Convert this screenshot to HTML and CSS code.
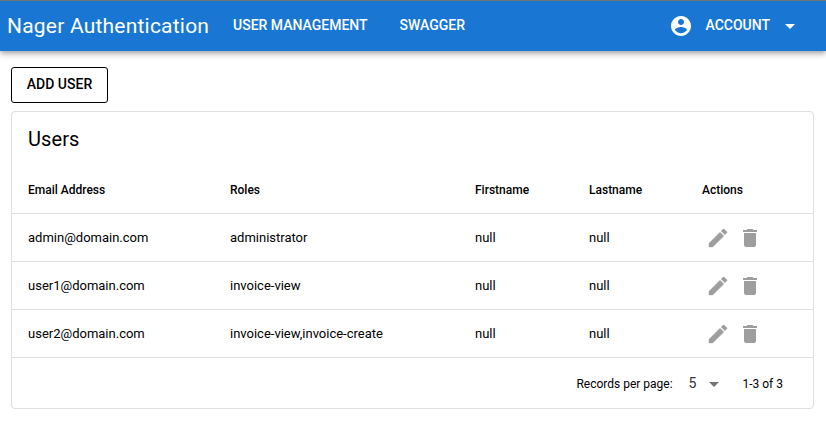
FILE: index.html
```html
<!DOCTYPE html>
<html lang="en">
<head>
<meta charset="utf-8">
<title>Nager Authentication</title>
<link rel="stylesheet" href="styles.css">
</head>
<body>
<svg class="sprite" aria-hidden="true">
  <symbol id="account" viewBox="0 0 24 24"><path d="M12 2C6.480 2 2 6.480 2 12s4.480 10 10 10 10-4.480 10-10S17.520 2 12 2zm0 3c1.660 0 3 1.340 3 3s-1.340 3-3 3-3-1.340-3-3 1.340-3 3-3zm0 14.200c-2.500 0-4.710-1.280-6-3.220.030-1.990 4-3.080 6-3.080 1.990 0 5.970 1.090 6 3.080-1.290 1.940-3.500 3.220-6 3.220z"/></symbol>
  <symbol id="drop" viewBox="0 0 24 24"><path d="M7 10l5 5 5-5z"/></symbol>
  <symbol id="edit" viewBox="0 0 24 24"><path stroke="currentColor" stroke-width=".4" d="M3 17.250V21h3.750L17.810 9.940l-3.750-3.750L3 17.250zM20.710 7.040c.390-.390.390-1.020 0-1.410l-2.340-2.340c-.390-.390-1.020-.390-1.410 0l-1.830 1.830 3.750 3.750 1.830-1.830z"/></symbol>
  <symbol id="delete" viewBox="0 0 24 24"><path d="M6 19c0 1.100.900 2 2 2h8c1.100 0 2-.900 2-2V7H6v12zM19 4h-3.500l-1-1h-5l-1 1H5v2h14V4z"/></symbol>
</svg>
<header class="toolbar">
  <div class="brand">Nager Authentication</div>
  <nav class="nav"><a>User Management</a><a>Swagger</a></nav>
  <div class="account"><svg><use href="#account"/></svg><span>Account</span><svg class="caret"><use href="#drop"/></svg></div>
</header>
<main class="page">
  <button class="add">Add User</button>
  <section class="card">
    <h1 class="title">Users</h1>
    <div class="row head"><span>Email Address</span><span>Roles</span><span>Firstname</span><span>Lastname</span><span>Actions</span></div>
    <div class="row"><span>admin@domain.com</span><span>administrator</span><span>null</span><span>null</span><span class="actions"><svg><use href="#edit"/></svg><svg><use href="#delete"/></svg></span></div>
    <div class="row"><span>user1@domain.com</span><span>invoice-view</span><span>null</span><span>null</span><span class="actions"><svg><use href="#edit"/></svg><svg><use href="#delete"/></svg></span></div>
    <div class="row"><span>user2@domain.com</span><span>invoice-view,invoice-create</span><span>null</span><span>null</span><span class="actions"><svg><use href="#edit"/></svg><svg><use href="#delete"/></svg></span></div>
    <footer class="footer"><span>Records per page:</span><span class="select"><span class="value">5</span><svg><use href="#drop"/></svg></span><span class="range">1-3 of 3</span></footer>
  </section>
</main>
</body>
</html>
```

FILE: styles.css
```css
* { box-sizing: border-box; }
body { margin: 0; font-family: Roboto, "Liberation Sans", sans-serif; font-size: 14px; color: #000; background: #fff; }
svg { fill: currentColor; display: block; flex: none; width: 24px; height: 24px; }
.sprite { display: none; }
.toolbar { display: flex; align-items: center; height: 51px; padding: 0 24px 0 7px; background: #1976d2; color: #fff; border-top: 1px solid #757575; box-shadow: 0 2px 4px -1px rgba(0,0,0,.2), 0 4px 5px rgba(0,0,0,.14), 0 1px 10px rgba(0,0,0,.12); }
.brand { font-size: 21px; letter-spacing: .21px; width: 226px; white-space: nowrap; }
.nav { display: flex; gap: 32px; flex: 1; padding-bottom: 2px; }
.nav a, .account { font-weight: 500; text-transform: uppercase; }
.account { display: flex; align-items: center; }
.account span { margin: 0 8px 0 12px; padding-bottom: 2px; }
.page { padding: 16px 12px 0 11px; }
.add { display: block; width: 97px; height: 36px; padding: 0 0 2px; border: 1px solid #000; border-radius: 3px; background: #fff; font: 500 14px Roboto, sans-serif; text-transform: uppercase; color: #000; }
.card { margin-top: 8px; height: 298px; border: 1px solid #e0e0e0; border-radius: 4px; }
.title { margin: 0; padding: 11px 16px 0; height: 54px; font-size: 20px; line-height: 32px; font-weight: 400; letter-spacing: .1px; }
.row { display: grid; grid-template-columns: 202px 245px 114px 113px 1fr; align-items: center; height: 48px; padding-left: 16px; border-bottom: 1px solid #e0e0e0; font-size: 13px; }
.head { font-size: 12px; font-weight: 500; }
.actions { display: flex; gap: 8px; padding-left: 4px; color: #9e9e9e; }
.footer { display: flex; align-items: center; justify-content: flex-end; height: 51px; padding-right: 30px; font-size: 12px; }
.select { display: flex; align-items: center; margin: 0 16px; font-size: 14px; gap: 6px; color: #333; }
.value { padding-bottom: 2px; }
.select svg { color: #757575; }
```
